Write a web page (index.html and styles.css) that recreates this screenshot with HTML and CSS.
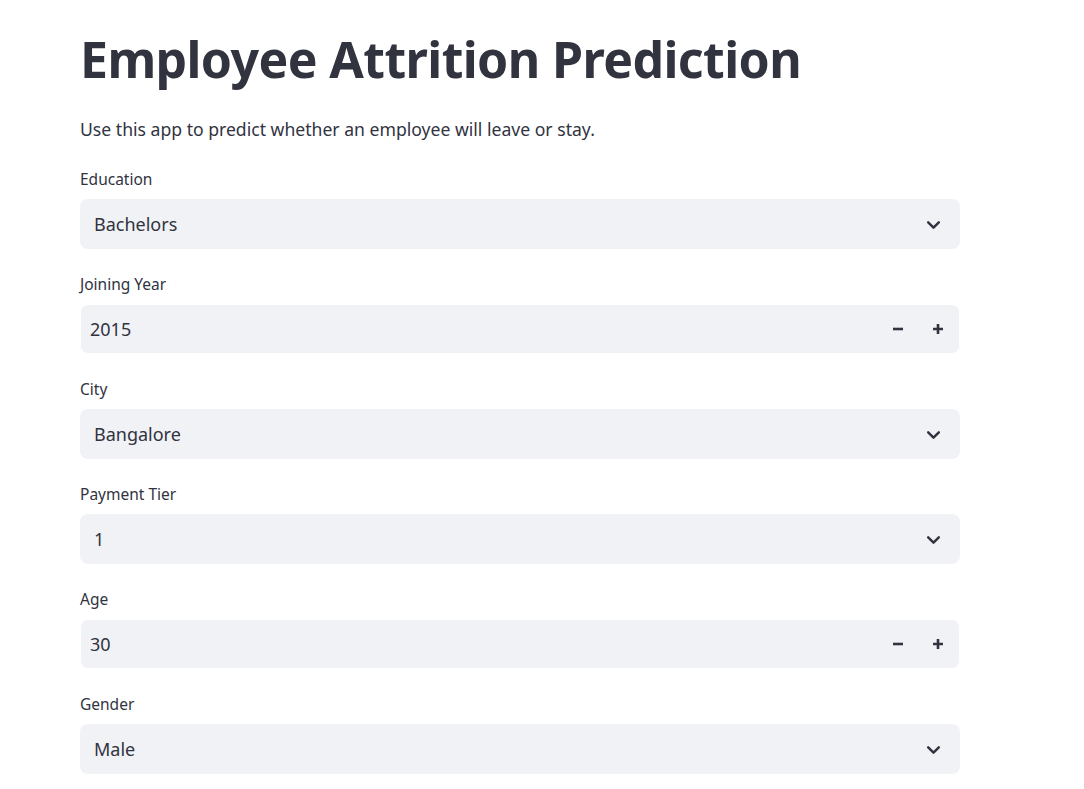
FILE: index.html
```html
<!DOCTYPE html>
<html>
<head>
<meta charset="utf-8">
<link rel="stylesheet" href="styles.css">
</head>
<body>
<main class="app">
  <h1 class="title">Employee Attrition Prediction</h1>
  <p class="intro">Use this app to predict whether an employee will leave or stay.</p>

  <div class="field">
    <label class="label">Education</label>
    <div class="select"><span class="value">Bachelors</span>
      <svg class="chev" viewBox="0 0 16 16"><path d="M3 6l5 5 5-5"/></svg></div>
  </div>

  <div class="field">
    <label class="label">Joining Year</label>
    <div class="number"><span class="value">2015</span>
      <span class="steps">
        <svg class="step" viewBox="0 0 10 10"><path d="M0 5h10"/></svg>
        <svg class="step" viewBox="0 0 10 10"><path d="M0 5h10M5 0v10"/></svg>
      </span></div>
  </div>

  <div class="field">
    <label class="label">City</label>
    <div class="select"><span class="value">Bangalore</span>
      <svg class="chev" viewBox="0 0 16 16"><path d="M3 6l5 5 5-5"/></svg></div>
  </div>

  <div class="field">
    <label class="label">Payment Tier</label>
    <div class="select"><span class="value">1</span>
      <svg class="chev" viewBox="0 0 16 16"><path d="M3 6l5 5 5-5"/></svg></div>
  </div>

  <div class="field">
    <label class="label">Age</label>
    <div class="number"><span class="value">30</span>
      <span class="steps">
        <svg class="step" viewBox="0 0 10 10"><path d="M0 5h10"/></svg>
        <svg class="step" viewBox="0 0 10 10"><path d="M0 5h10M5 0v10"/></svg>
      </span></div>
  </div>

  <div class="field">
    <label class="label">Gender</label>
    <div class="select"><span class="value">Male</span>
      <svg class="chev" viewBox="0 0 16 16"><path d="M3 6l5 5 5-5"/></svg></div>
  </div>
</main>
</body>
</html>
```

FILE: styles.css
```css
html, body {
  margin: 0;
  padding: 0;
  background: #ffffff;
}
body {
  font-family: "Noto Sans", "Open Sans", sans-serif;
  color: #31333f;
}
.app {
  width: 880px;
  margin-left: 80px;
  padding-top: 24px;
  display: flex;
  flex-direction: column;
}
.title {
  margin: 0;
  font-size: 50px;
  font-weight: 700;
  line-height: 70px;
  letter-spacing: -0.6px;
  color: #31333f;
}
.intro {
  margin: 21px 0 0 0;
  font-size: 17.6px;
  line-height: 28px;
}
.field {
  display: flex;
  flex-direction: column;
  margin-top: 25px;
}
.field + .field {
  margin-top: 24px;
}
.label {
  font-size: 15.5px;
  line-height: 22px;
  margin-bottom: 9px;
}
.select, .number {
  display: flex;
  align-items: center;
  justify-content: space-between;
  background: #f0f2f6;
  border-radius: 8px;
  box-sizing: border-box;
  height: 50px;
}
.select {
  padding: 0 18px 0 14px;
}
.number {
  border: 1px solid #ffffff;
  padding: 0 16px 0 9px;
}
.value {
  font-size: 18px;
}
.chev {
  width: 17px;
  height: 17px;
  fill: none;
  stroke: #31333f;
  stroke-width: 2.3;
  stroke-linecap: round;
  stroke-linejoin: round;
}
.steps {
  display: flex;
  gap: 30px;
}
.step {
  width: 10px;
  height: 10px;
  fill: none;
  stroke: #31333f;
  stroke-width: 2.6;
}
```
